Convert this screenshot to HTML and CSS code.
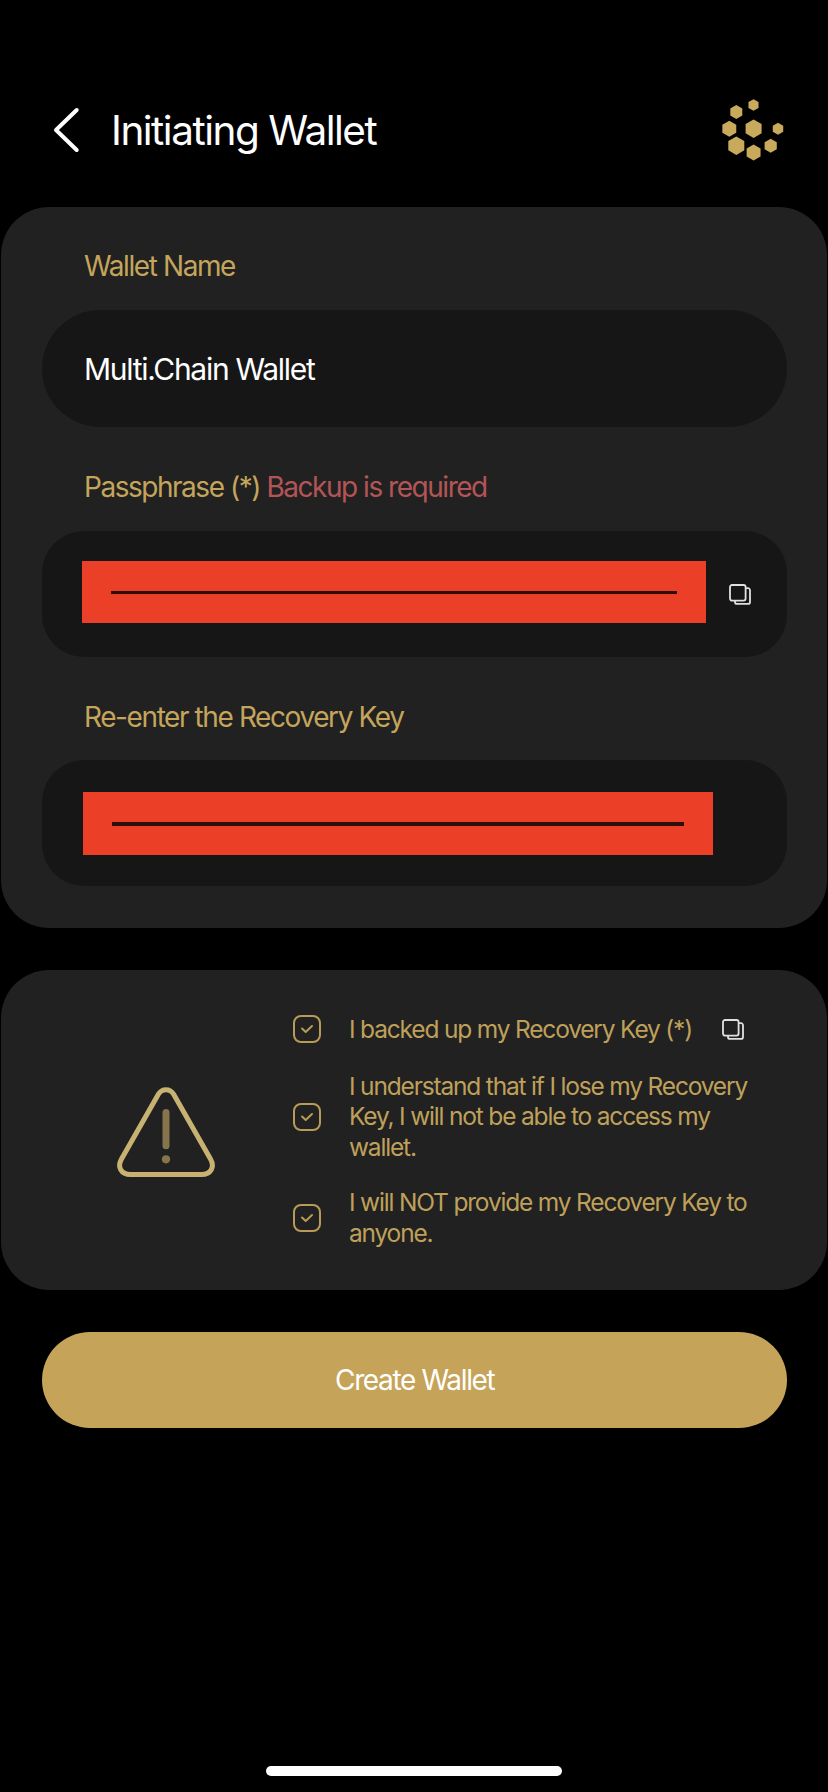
FILE: index.html
```html
<!DOCTYPE html>
<html lang="en">
<head>
<meta charset="utf-8">
<title>Initiating Wallet</title>
<link rel="stylesheet" href="styles.css">
</head>
<body>
<svg class="defs" aria-hidden="true">
  <symbol id="copy" viewBox="0 0 24 24"><path d="M7 18v.9a2 2 0 0 0 2 2h11a2 2 0 0 0 2-2V7.200a2 2 0 0 0-2-2h-2"/><rect x="2" y="2" width="15.600" height="15.600" rx="2"/></symbol>
  <symbol id="check" viewBox="0 0 28 28"><rect x="1" y="1" width="26" height="26" rx="7"/><path d="M9 13.500l3.700 3.500 6.300-6"/></symbol>
  <polygon id="hex" points="0,-1 .87,-.5 .87,.5 0,1 -.87,.5 -.87,-.5"/>
</svg>
<div class="screen">
  <header class="header">
    <svg class="back" viewBox="0 0 28 48"><path d="M24.700 4L4 24l20.700 20"/></svg>
    <h1 class="title">Initiating Wallet</h1>
    <svg class="logo" viewBox="0 0 64 64">
      <use href="#hex" transform="translate(32.500 7) scale(5.800)"/>
      <use href="#hex" transform="translate(15.300 14) scale(6.900)"/>
      <use href="#hex" transform="translate(8.300 30.700) scale(8)"/>
      <use href="#hex" transform="translate(32.600 30.700) scale(9.200)"/>
      <use href="#hex" transform="translate(57 30.700) scale(6)"/>
      <use href="#hex" transform="translate(15.300 47.700) scale(9.200)"/>
      <use href="#hex" transform="translate(49.700 47.700) scale(7)"/>
      <use href="#hex" transform="translate(32.600 54.400) scale(8)"/>
    </svg>
  </header>
  <main class="content">
    <section class="panel form">
      <div class="label">Wallet Name</div>
      <div class="field name">Multi.Chain Wallet</div>
      <div class="label passphrase">Passphrase (*) <span class="warn">Backup is required</span></div>
      <div class="field phrase"><div class="redact"></div><svg class="copy"><use href="#copy"/></svg></div>
      <div class="label reenter">Re-enter the Recovery Key</div>
      <div class="field key"><div class="redact"></div></div>
    </section>
    <section class="panel confirm">
      <svg class="alert" viewBox="0 0 100 92">
        <path class="tri" d="M57.500 8L94.500 73C99 81 95 88.500 85.500 88.500H14.500C5 88.500 1 81 5.500 73L42.500 8C46 2.200 54 2.200 57.500 8Z"/>
        <rect class="mark" x="46.500" y="23" width="7" height="40.300" rx="3.500"/>
        <circle class="mark" cx="50" cy="73.300" r="4.100"/>
      </svg>
      <ul class="checks">
        <li class="item"><svg class="box"><use href="#check"/></svg><p class="text">I backed up my Recovery Key (*)</p><svg class="copy"><use href="#copy"/></svg></li>
        <li class="item"><svg class="box"><use href="#check"/></svg><p class="text">I understand that if I lose my Recovery<br>Key, I will not be able to access my<br>wallet.</p></li>
        <li class="item"><svg class="box"><use href="#check"/></svg><p class="text">I will NOT provide my Recovery Key to<br>anyone.</p></li>
      </ul>
    </section>
    <button class="create">Create Wallet</button>
  </main>
  <div class="home"></div>
</div>
</body>
</html>
```
FILE: styles.css
```css
* { box-sizing: border-box; }
body { margin: 0; background: #000; font-family: Inter, "Liberation Sans", sans-serif; color: #fff; }
.defs { position: absolute; width: 0; height: 0; }
.screen { width: 828px; height: 1792px; display: flex; flex-direction: column; overflow: hidden; }
.header { height: 207px; flex: none; display: flex; align-items: flex-start; padding: 98px 43px 0 52px; }
.back { width: 28px; height: 48px; margin-top: 8px; fill: none; stroke: #fff; stroke-width: 4; stroke-linecap: round; stroke-linejoin: round; }
.title { flex: 1; margin: 9px 0 0 31px; font-size: 40.5px; line-height: 48px; font-weight: 400; letter-spacing: -1.5px; white-space: nowrap; }
.logo { width: 64px; height: 64px; fill: #c9a95c; }
.content { display: flex; flex-direction: column; gap: 42px; padding: 0 .6px 0 1px; }
.panel { background: #212121; border-radius: 48px; }
.form { height: 721px; padding: 42px 40px 0 41px; }
.label { height: 34px; margin-bottom: 27px; padding-left: 42px; font-size: 28px; line-height: 34px; letter-spacing: -1.41px; color: #c4a55b; white-space: nowrap; }
.passphrase { height: 35px; line-height: 36px; letter-spacing: -1.47px; }
.reenter { line-height: 36px; }
.warn { color: #b35557; }
.field { display: flex; align-items: center; background: #161616; border-radius: 42px; margin-bottom: 42px; padding-left: 42px; }
.name { height: 117px; border-radius: 58.5px; font-size: 30px; line-height: 36px; letter-spacing: -1.28px; white-space: nowrap; }
.phrase { height: 126px; padding: 0 35px 4px 40px; justify-content: space-between; }
.key { height: 126px; margin-bottom: 0; padding: 1px 0 0 41px; }
.redact { width: 624px; height: 62px; background: #eb4027; display: flex; align-items: center; padding: 0 29px; }
.redact::before { content: ""; width: 100%; height: 3px; background: #2f0d08; }
.key .redact { width: 630px; height: 63px; }
.key .redact::before { height: 4px; }
.copy { width: 24px; height: 24px; fill: none; stroke: #e0e0e0; stroke-width: 1.8; }
.phrase .copy { margin-top: 6px; }
.confirm { height: 320px; display: flex; padding: 42px 0 0 115px; }
.alert { width: 100px; height: 92px; margin-top: 74px; flex: none; }
.tri { fill: none; stroke: #c8b272; stroke-width: 5; }
.mark { fill: #85754c; }
.checks { list-style: none; margin: 0 0 0 77px; padding: 0; display: flex; flex-direction: column; gap: 25px; }
.item { display: flex; align-items: center; }
.item:first-child { height: 34px; }
.box { width: 28px; height: 28px; margin-right: 28px; flex: none; fill: none; stroke: #b99b58; stroke-width: 2; stroke-linecap: round; stroke-linejoin: round; }
.text { margin: 0; font-size: 24.5px; line-height: 30.4px; letter-spacing: -1.18px; color: #bfa05a; white-space: nowrap; }
.item .copy { margin: 2px 0 0 29px; }
.create { height: 95.5px; margin: 0 40px 0 41px; padding: 0; border: 0; border-radius: 48px; background: #c5a459; color: #fff; font: 400 28px/34px Inter, "Liberation Sans", sans-serif; letter-spacing: -1.35px; }
.home { width: 296px; height: 10px; margin: auto auto 16px; border-radius: 5px; background: #fff; flex: none; }
```
